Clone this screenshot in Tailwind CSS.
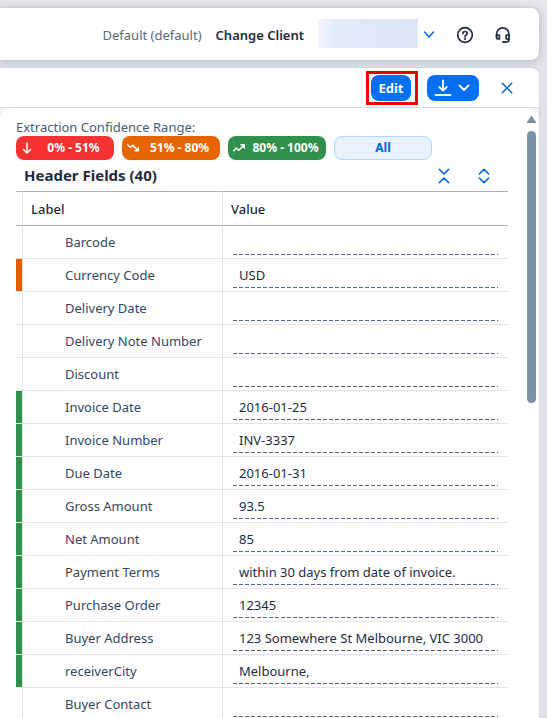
<!DOCTYPE html>
<html lang="en">
<head>
<meta charset="utf-8">
<meta name="viewport" content="width=device-width, initial-scale=1">
<title>Extraction Results</title>
<script src="https://cdn.jsdelivr.net/npm/@tailwindcss/browser@4"></script>
</head>
<body class="flex h-screen flex-col gap-2 overflow-hidden bg-linear-to-b from-[#e8e9eb] via-[#e0e3e6] via-15% to-[#e0e3e6] pt-2 pr-2 font-['Noto_Sans',sans-serif] text-[13px] leading-5 text-[#1d2d3e]">
<header class="flex h-[52px] shrink-0 items-center justify-end rounded-r-lg bg-white pt-0.5 pr-[27px] shadow-[0_0_2px_#b4bdc6,0_2px_10px_2px_#c3cad1]">
  <span class="mr-3.5 text-[#556b82]">Default (default)</span>
  <label for="client" class="mr-3.5 font-semibold">Change Client</label>
  <input id="client" readonly class="mr-[3px] mb-1 h-[29px] w-[100px] bg-linear-to-r from-[#f3f6fd] via-[#e2eaf8] via-20% to-[#dce6f6] outline-none">
  <button aria-label="Open client list" class="mr-[19px] grid size-4 place-items-center text-[#0064d9]">
    <svg class="size-4" viewBox="0 0 16 16" fill="none" stroke="currentColor" stroke-width="1.5" stroke-linecap="round"><path d="M3.5 5 8 10 12.5 5"/></svg>
  </button>
  <button aria-label="Help" class="mr-5 grid size-[18px] place-items-center">
    <svg class="size-[18px]" viewBox="0 0 18 18" fill="none" stroke="currentColor" stroke-width="1.7" stroke-linecap="round"><circle cx="9" cy="9" r="7.3"/><path d="M6.9 7.4C6.9 4.8 11.2 4.9 11.2 7.3 11.2 9 9 8.8 9 10.3"/><circle cx="9" cy="12.7" r=".4"/></svg>
  </button>
  <button aria-label="Support" class="grid size-[18px] place-items-center">
    <svg class="size-[18px]" viewBox="0 0 18 18" fill="none" stroke="currentColor" stroke-width="1.7" stroke-linecap="round" stroke-linejoin="round"><path d="M2.6 11V8a6.2 6.2 0 0 1 12.4 0V13.2c0 1.8-1 2.8-2.5 2.8H10"/><path d="M2.6 9h2.8v4H3.8a1.2 1.2 0 0 1-1.2-1.2zM15 9h-2.8v4H15"/><path d="M9.2 16h1.6" stroke-width="2.2"/></svg>
  </button>
</header>

<main class="flex min-h-0 flex-1 flex-col rounded-tr-lg bg-[#f3f4f5] shadow-[0_0_2px_#b4bdc6]">
  <div class="flex h-10 shrink-0 items-center justify-end rounded-tr-lg border-b border-[#d5d9dd] bg-white pr-6">
    <div class="mr-[9px] border-3 border-[#eb0000] py-px pr-1 pl-0.5">
      <button class="block h-[26px] w-10 rounded-lg bg-[#0070f2] font-bold text-white">Edit</button>
    </div>
    <button aria-label="Download" class="mr-5 flex h-[26px] w-[52px] items-center justify-center gap-1 rounded-lg bg-[#0070f2] text-white">
      <svg class="h-[18px] w-[18px]" viewBox="0 0 18 18" fill="none" stroke="currentColor" stroke-width="1.8" stroke-linecap="round" stroke-linejoin="round"><path d="M9 1.5v10M5.3 8 9 11.7 12.7 8M1.5 16h15"/></svg>
      <svg class="size-4" viewBox="0 0 16 16" fill="none" stroke="currentColor" stroke-width="1.8" stroke-linecap="round" stroke-linejoin="round"><path d="M3.5 5.5 8 10 12.5 5.5"/></svg>
    </button>
    <button aria-label="Close" class="grid size-4 place-items-center text-[#0064d9]">
      <svg class="size-4" viewBox="0 0 16 16" fill="none" stroke="currentColor" stroke-width="1.5" stroke-linecap="round"><path d="m3.3 3.3 9.4 9.4M12.7 3.3l-9.4 9.4"/></svg>
    </button>
  </div>

  <div class="flex min-h-0 flex-1 rounded-t-xl bg-white pl-4">
    <section class="min-w-0 flex-1 overflow-hidden pt-2.5">
      <p id="range" class="h-[18px] leading-[18px] text-[#475e75]">Extraction Confidence Range:</p>
      <div role="group" aria-labelledby="range" class="flex gap-2 text-[12px] leading-4 font-bold text-white">
        <button class="flex h-6 w-[98px] items-center rounded-lg bg-[#f53232] pl-[5px]">
          <svg class="size-3 shrink-0" viewBox="0 0 12 12" fill="none" stroke="currentColor" stroke-width="1.5" stroke-linecap="round" stroke-linejoin="round"><path d="M6 1v10M2.5 7.5 6 11l3.5-3.5"/></svg>
          <span class="flex-1 text-center">0% - 51%</span>
        </button>
        <button class="flex h-6 w-[98px] items-center rounded-lg bg-[#e76500] pl-[5px]">
          <svg class="size-3 shrink-0" viewBox="0 0 12 12" fill="none" stroke="currentColor" stroke-width="1.5" stroke-linecap="round" stroke-linejoin="round"><path d="M.7 2.8 3.2 5.2 5.8 3.4l5 5M8 8.8h3.3V5.6"/></svg>
          <span class="flex-1 text-center">51% - 80%</span>
        </button>
        <button class="flex h-6 w-[98px] items-center rounded-lg bg-[#30914c] pl-[5px]">
          <svg class="size-3 shrink-0" viewBox="0 0 12 12" fill="none" stroke="currentColor" stroke-width="1.5" stroke-linecap="round" stroke-linejoin="round"><path d="M.7 8.8 3.4 6 5.8 8.2l5.2-5M8 2.8h3.3V6"/></svg>
          <span class="flex-1 text-center">80% - 100%</span>
        </button>
        <button class="h-6 w-[98px] rounded-lg border border-[#b3d6ff] bg-[#e8f3ff] text-[#0064d9]">All</button>
      </div>

      <div class="mr-[31px] flex h-[31px] items-center justify-end gap-6 pr-4 pl-2 text-[#0064d9]">
        <h2 class="mr-auto pb-0.5 text-[15px] font-bold text-[#1d2d3e]">Header Fields (40)</h2>
        <button aria-label="Collapse all" class="grid size-4 place-items-center">
          <svg class="size-4" viewBox="0 0 16 16" fill="none" stroke="currentColor" stroke-width="1.5" stroke-linecap="round" stroke-linejoin="round"><path d="M3.3 1.4 8 6l4.7-4.6M3.3 14.6 8 10l4.7 4.6"/></svg>
        </button>
        <button aria-label="Expand all" class="grid size-4 place-items-center">
          <svg class="size-4" viewBox="0 0 16 16" fill="none" stroke="currentColor" stroke-width="1.5" stroke-linecap="round" stroke-linejoin="round"><path d="M3.3 6 8 1.4 12.7 6M3.3 10 8 14.6l4.7-4.6"/></svg>
        </button>
      </div>

      <div class="mr-[31px]">
        <table class="w-full table-fixed border-separate border-spacing-0">
          <colgroup><col class="w-[7px]"><col class="w-[200px]"><col></colgroup>
          <thead>
            <tr class="h-[35px] text-left">
              <td class="border-y border-r border-y-[#a8b3bd] border-r-[#e5e5e5] p-0"></td>
              <th scope="col" class="border-y border-r border-y-[#a8b3bd] border-r-[#e5e5e5] px-2 py-0 font-medium">Label</th>
              <th scope="col" class="border-y border-[#a8b3bd] px-2 py-0 font-medium">Value</th>
            </tr>
          </thead>
          <tbody id="rows"></tbody>
        </table>
      </div>
    </section>
    <div aria-hidden="true" class="-ml-3 flex w-3 flex-col gap-2 pt-2 pr-[3px]">
      <svg class="h-[7px] w-[9px]" viewBox="0 0 9 7" fill="#7b91a8"><path d="M3.7.6a1 1 0 0 1 1.6 0L9 6v1H0V6z"/></svg>
      <div class="h-[272px] w-[9px] rounded-full bg-[#7b91a8]"></div>
    </div>
  </div>
</main>

<template id="row">
  <tr class="h-[33px]">
    <td class="border-r border-b border-[#e5e5e5] p-0"></td>
    <th scope="row" class="border-r border-b border-[#e5e5e5] py-0 pr-2 pl-[42px] text-left font-normal text-[#33485d]"><label></label></th>
    <td class="border-b border-[#e5e5e5] py-0 pr-2.5 pl-2.5 align-top"><input readonly class="block h-[29px] w-full bg-[repeating-linear-gradient(to_right,#556b82_0_4px,transparent_4px_6px)] bg-[length:100%_1px] bg-bottom bg-no-repeat px-1.5 pt-0.5 text-[#1d2d3e] outline-none"></td>
  </tr>
</template>
<script>
const fields = [
  ["Barcode", "", ""],
  ["Currency Code", "USD", "bg-[#e06000]"],
  ["Delivery Date", "", ""],
  ["Delivery Note Number", "", ""],
  ["Discount", "", ""],
  ["Invoice Date", "2016-01-25", "bg-[#30914c]"],
  ["Invoice Number", "INV-3337", "bg-[#30914c]"],
  ["Due Date", "2016-01-31", "bg-[#30914c]"],
  ["Gross Amount", "93.5", "bg-[#30914c]"],
  ["Net Amount", "85", "bg-[#30914c]"],
  ["Payment Terms", "within 30 days from date of invoice.", "bg-[#30914c]"],
  ["Purchase Order", "12345", "bg-[#30914c]"],
  ["Buyer Address", "123 Somewhere St Melbourne, VIC 3000", "bg-[#30914c]"],
  ["receiverCity", "Melbourne,", "bg-[#30914c]"],
  ["Buyer Contact", "", ""]
];
const body = document.getElementById("rows");
const template = document.getElementById("row");
fields.forEach(([name, value, status], i) => {
  const row = template.content.cloneNode(true);
  if (status) row.querySelector("td").classList.add(status);
  const label = row.querySelector("label");
  const input = row.querySelector("input");
  label.textContent = name;
  label.htmlFor = input.id = "field-" + i;
  input.value = value;
  body.append(row);
});
</script>
</body>
</html>
